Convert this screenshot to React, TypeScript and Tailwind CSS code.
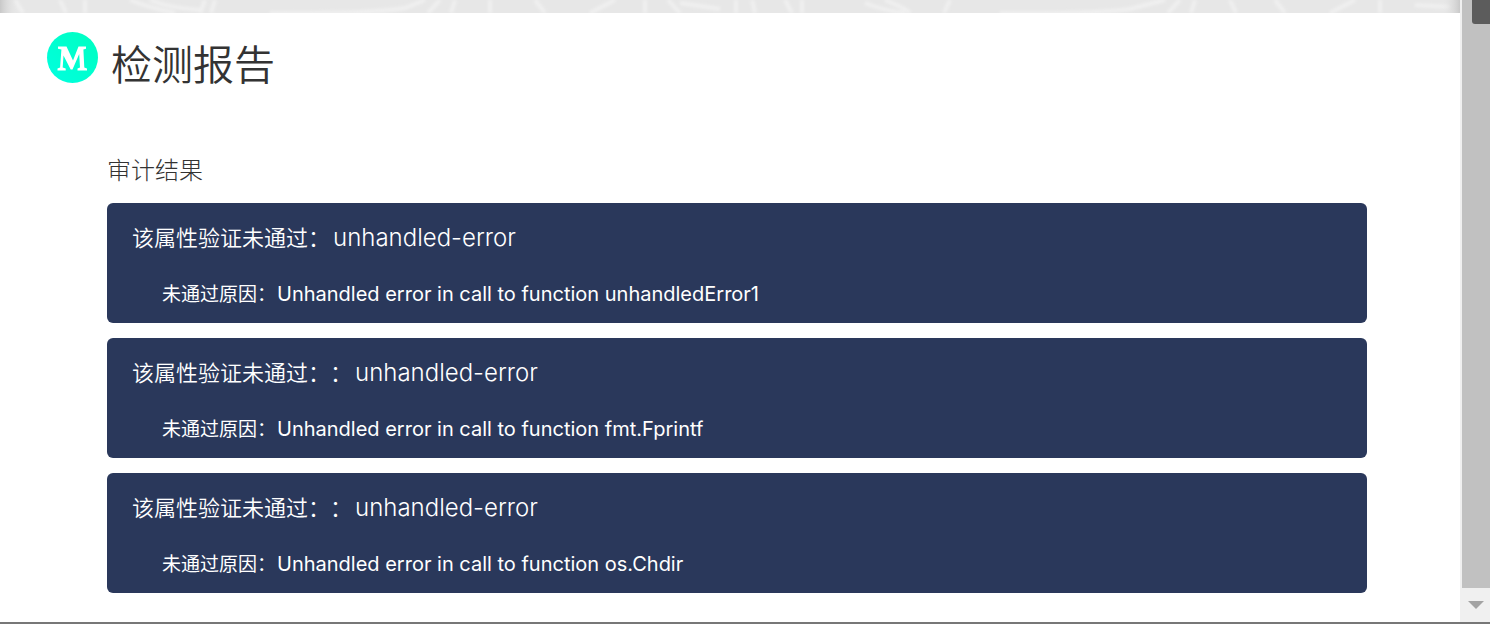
import React from "react";

type Finding = { title: string; rule: string; reason: string };

const findings: Finding[] = [
  {
    title: "该属性验证未通过：",
    rule: "unhandled-error",
    reason: "Unhandled error in call to function unhandledError1",
  },
  {
    title: "该属性验证未通过：：",
    rule: "unhandled-error",
    reason: "Unhandled error in call to function fmt.Fprintf",
  },
  {
    title: "该属性验证未通过：：",
    rule: "unhandled-error",
    reason: "Unhandled error in call to function os.Chdir",
  },
];

function Banner() {
  return (
    <div className="h-[13px] bg-[#e7e7e7]">
      <svg className="block h-full w-full" viewBox="0 0 1460 13" preserveAspectRatio="none" aria-hidden="true">
        <defs>
          <linearGradient id="edgeLeft">
            <stop offset="0" stopColor="#c8c8c8" />
            <stop offset="1" stopColor="#e7e7e7" stopOpacity="0" />
          </linearGradient>
          <linearGradient id="edgeRight">
            <stop offset="0" stopColor="#e7e7e7" stopOpacity="0" />
            <stop offset="1" stopColor="#c9c9c9" />
          </linearGradient>
          <filter id="soften" x="-5%" y="-50%" width="110%" height="200%">
            <feGaussianBlur stdDeviation="1.5" />
          </filter>
        </defs>
        <g fill="none" stroke="#f0f0f0" strokeWidth="4" filter="url(#soften)">
          <path d="M15 0l8 13M60 0l6 13M85 0v13M130 0q20 8 45 13M150 0q20 8 50 10M200 13l5-13M215 0l-4 13M270 13q100 1 135-5l20-8M440 0l-12 13M455 0l-4 13M490 0v13M535 0l10 13M590 13l25-13M645 0v13M668 0l12 13M680 3l40 6M736 0v13" />
          <path d="M752 0l3 13M785 0l7 13M802 0v13M865 3q20 8 40 10M885 0q20 8 25 13M950 0l-6 13M1000 13q100 1 130-4l35-9M1180 0l-12 13M1195 0l-4 13M1230 0l6 13M1275 0l10 13M1330 13l25-13M1380 0v13M1415 5l35 2" />
        </g>
        <rect width="18" height="13" fill="url(#edgeLeft)" />
        <rect x="1442" width="18" height="13" fill="url(#edgeRight)" />
      </svg>
    </div>
  );
}

function Logo() {
  return (
    <svg className="size-[52px] shrink-0" viewBox="0 0 52 52" role="img" aria-label="M">
      <defs>
        <linearGradient id="logoFill" x1="1" y1="0" x2="0" y2="1">
          <stop offset="0" stopColor="#00ffc0" />
          <stop offset="1" stopColor="#00ffe0" />
        </linearGradient>
      </defs>
      <circle cx="26.5" cy="25.5" r="25.5" fill="url(#logoFill)" />
      <path
        fill="#fff"
        d="M12 14.500h8.500l6.500 14 5.500-14H40v2.200l-2.600.8.900 18 2.700.9v2.100h-9.500v-2.100l2.500-.9-.8-13.500L26.500 37.500h-1.800l-7.200-14-.8 12 3 .9v2.100H11.500v-2.100l2.600-.9 1.300-18-3.400-.8z"
      />
    </svg>
  );
}

function FindingCard({ title, rule, reason }: Finding) {
  return (
    <li className="h-[120px] rounded-md bg-[#2a385b] pl-[25px] pt-[18px] text-white">
      <h3 className="whitespace-nowrap text-[22px] font-[350] leading-[34px]">
        {title}
        <span className="pl-[3px] text-2xl font-light leading-[34px]">{rule}</span>
      </h3>
      <p className="mt-[22px] whitespace-nowrap pl-[30px] text-[19px] leading-[34px]">
        未通过原因：
        <span className="pl-px text-xl leading-[34px]">{reason}</span>
      </p>
    </li>
  );
}

function ScrollBar() {
  return (
    <div className="flex w-[30px] shrink-0 flex-col bg-[#f0f0f0] pl-[2px]" aria-hidden="true">
      <div className="flex flex-1 justify-end bg-[#c1c1c1]">
        <div className="h-6 w-[18px] rounded-bl-[3px] bg-[#5c5c5c]" />
      </div>
      <div className="flex h-[34px] items-center justify-center">
        <svg className="h-2 w-4" viewBox="0 0 16 8">
          <path d="M0 0h16L8 8z" fill="#a3a3a3" />
        </svg>
      </div>
    </div>
  );
}

export default function App() {
  return (
    <div className="flex min-h-screen flex-col border-b-2 border-[#777777] bg-white font-['Inter','Noto_Sans_CJK_SC',sans-serif] text-[#333333] [text-spacing-trim:space-all]">
      <div className="flex flex-1">
        <main className="min-w-0 flex-1">
          <Banner />
          <header className="flex items-start gap-[13px] pl-[46px] pt-[19px]">
            <Logo />
            <h1 className="text-[41px] font-[350] leading-[66px]">检测报告</h1>
          </header>
          <section className="pl-[107px] pr-[93px] pt-[55px]">
            <h2 className="text-2xl font-light leading-[36px]">审计结果</h2>
            <ul className="mt-[14px] flex flex-col gap-[15px]">
              {findings.map((finding) => (
                <FindingCard key={finding.reason} {...finding} />
              ))}
            </ul>
          </section>
        </main>
        <ScrollBar />
      </div>
    </div>
  );
}
